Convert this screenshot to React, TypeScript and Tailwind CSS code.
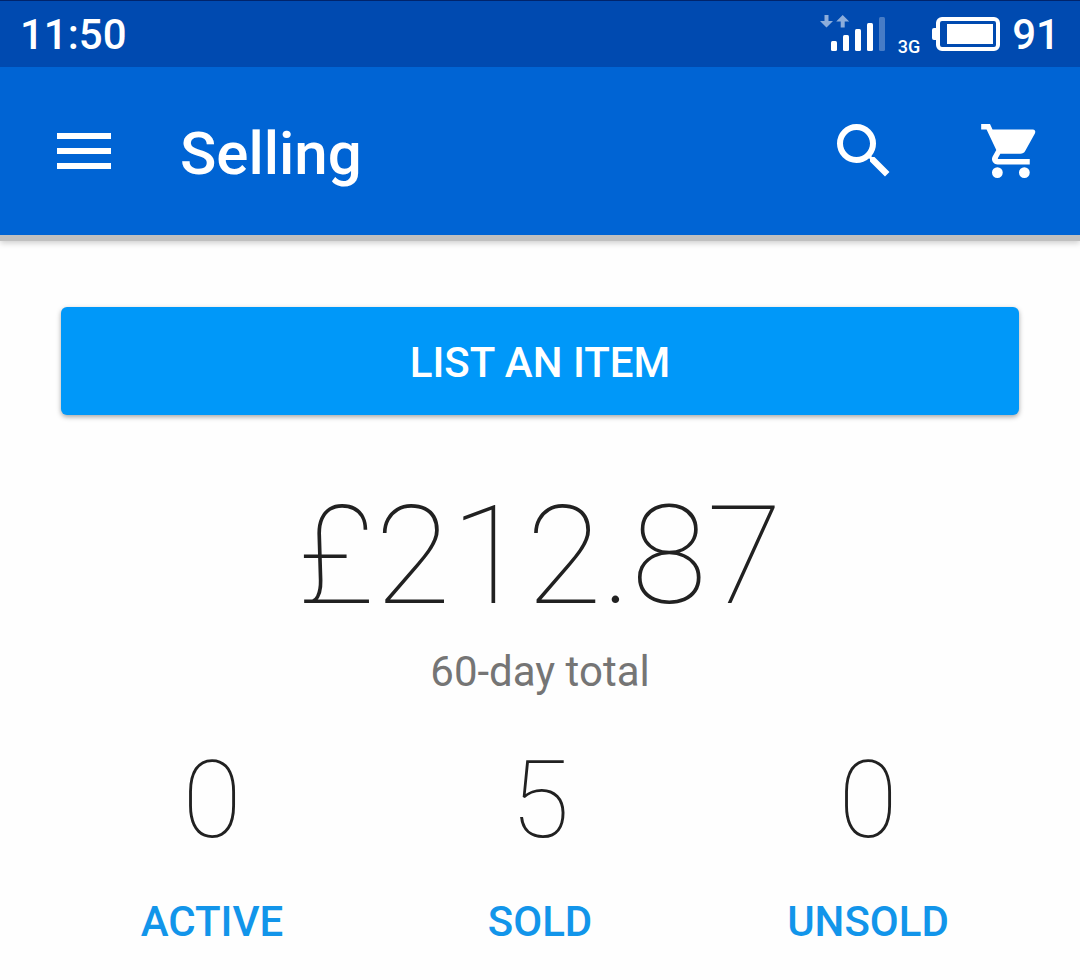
const stats = [
  { label: 'Active', value: 0 },
  { label: 'Sold', value: 5 },
  { label: 'Unsold', value: 0 },
]

function SignalIcon() {
  return (
    <svg width="66" height="40" viewBox="0 0 66 40" fill="currentColor" aria-hidden="true">
      <path d="M4.5 1h4v6H13l-6.5 6.5L0 7h4.5z" opacity=".55" />
      <path d="M20.7 13.5h4v-6h4.5L22.7 1l-6.5 6.5h4.5z" opacity=".55" />
      <rect x="11" y="27" width="6" height="10" rx="1.5" />
      <rect x="23" y="21" width="6" height="16" rx="1.5" />
      <rect x="35" y="15" width="6" height="22" rx="1.5" />
      <rect x="47" y="9" width="6" height="28" rx="1.5" />
      <rect x="59" y="3" width="6" height="34" rx="1.5" opacity=".28" />
    </svg>
  )
}

function BatteryIcon() {
  return (
    <svg width="68" height="34" viewBox="0 0 68 34" fill="currentColor" aria-hidden="true">
      <path d="M4 11H2a2 2 0 0 0-2 2v8a2 2 0 0 0 2 2h2z" />
      <rect x="6" y="2" width="60" height="30" rx="4" fill="none" stroke="currentColor" strokeWidth="4" />
      <rect x="15" y="7" width="46" height="20" />
    </svg>
  )
}

function StatusBar() {
  return (
    <div className="flex h-[67px] items-center justify-between border-t border-[#00246b] bg-[#004ab0] px-5 text-[42px] leading-12 font-medium">
      <span className="pt-0.5">11:50</span>
      <div className="flex items-center">
        <SignalIcon />
        <span className="ml-3 self-end text-[18px] leading-6">3G</span>
        <span className="ml-3">
          <BatteryIcon />
        </span>
        <span className="ml-3 pt-0.5">91</span>
      </div>
    </div>
  )
}

function AppBar() {
  return (
    <header className="relative flex h-[168px] items-center bg-[#0064d4] pl-12 pr-[30px] shadow-[0_6px_0_#c0c0c0,0_8px_6px_rgba(0,0,0,0.2)]">
      <button type="button" aria-label="Menu">
        <svg width="72" height="72" viewBox="0 0 24 24" fill="currentColor">
          <path d="M3 18h18v-2H3v2zm0-5h18v-2H3v2zm0-7v2h18V6H3z" />
        </svg>
      </button>
      <h1 className="ml-15 flex-1 pt-1.5 text-[60px] leading-18 font-medium">Selling</h1>
      <button type="button" aria-label="Search">
        <svg width="72" height="72" viewBox="0 0 24 24" fill="currentColor">
          <path d="M15.5 14h-.79l-.28-.27A6.47 6.47 0 0 0 16 9.5 6.5 6.5 0 1 0 9.5 16c1.61 0 3.09-.59 4.23-1.57l.27.28v.79l5 4.99L20.49 19l-4.99-5zm-6 0C7.01 14 5 11.99 5 9.5S7.01 5 9.5 5 14 7.01 14 9.5 11.99 14 9.5 14z" />
        </svg>
      </button>
      <button type="button" aria-label="Cart" className="ml-18">
        <svg width="78" height="66" viewBox="-2.4 -0.2 28.9 24.4" fill="currentColor">
          <path d="M7 18a2 2 0 1 0 0 4 2 2 0 0 0 0-4zM1 2v2h2l3.6 7.59-1.35 2.45c-.16.28-.25.61-.25.96 0 1.1.9 2 2 2h12v-2H7.42a.25.25 0 0 1-.25-.25l.03-.12.9-1.63h7.45c.75 0 1.41-.41 1.75-1.03l3.6-6.5c.35-.75.05-1.47-.7-1.47H5.21l-.94-2H1zm16 16a2 2 0 1 0 0 4 2 2 0 0 0 0-4z" />
        </svg>
      </button>
    </header>
  )
}

export default function App() {
  return (
    <div className="min-h-screen bg-[#fefefe] font-[Roboto,sans-serif]">
      <div className="text-white">
        <StatusBar />
        <AppBar />
      </div>
      <main className="pt-18 text-center text-[#212121]">
        <div className="px-[61px]">
          <button
            type="button"
            className="h-27 w-full rounded-md bg-[#0098f9] pt-1 text-[42px] leading-12 font-medium text-white uppercase shadow-[0_2px_5px_rgba(0,0,0,0.35)]"
          >
            List an item
          </button>
        </div>
        <p className="mt-[69px] text-[138px] leading-36 font-thin">£212.87</p>
        <p className="mt-5 text-[42px] leading-12 text-[#757575]">60-day total</p>
        <div className="mt-12 grid grid-cols-3 px-12">
          {stats.map((stat) => (
            <button key={stat.label} type="button" className="flex flex-col items-center gap-[42px]">
              <span className="text-[108px] leading-28 font-thin">{stat.value}</span>
              <span className="text-[42px] leading-12 font-medium text-[#1295ea] uppercase">{stat.label}</span>
            </button>
          ))}
        </div>
      </main>
    </div>
  )
}
